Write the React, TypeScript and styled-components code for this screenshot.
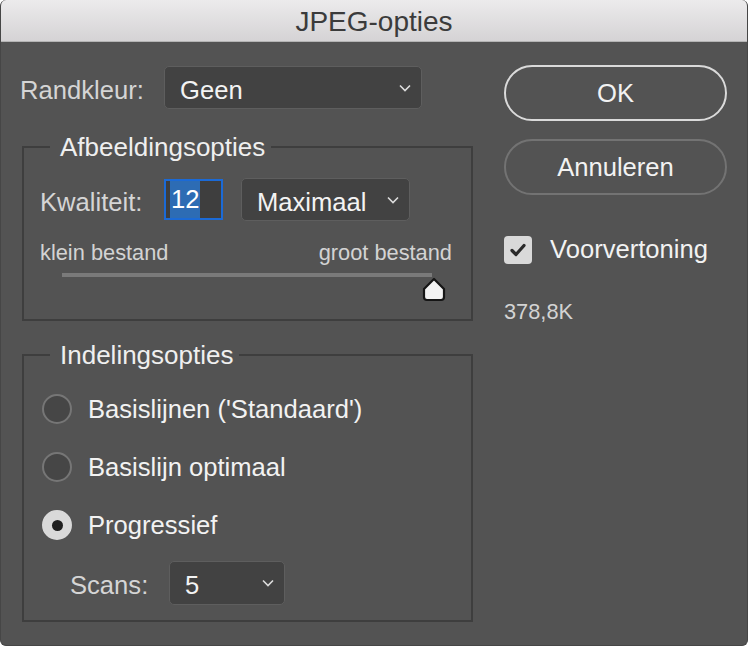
import React from "react";
import styled, { createGlobalStyle } from "styled-components";

const GlobalStyle = createGlobalStyle`
  html, body {
    margin: 0;
    padding: 0;
    background: #ffffff;
  }
`;

const Window = styled.div`
  width: 748px;
  height: 646px;
  box-sizing: border-box;
  background: #535353;
  border-radius: 6px;
  overflow: hidden;
  display: flex;
  flex-direction: column;
  font-family: "Liberation Sans", Arial, sans-serif;
  border: 1px solid #464646;
  border-top: none;
`;

const TitleBar = styled.div`
  height: 42px;
  box-sizing: border-box;
  padding-top: 3px;
  flex: none;
  display: flex;
  align-items: center;
  justify-content: center;
  background: linear-gradient(#ecebec, #d5d3d5);
  border-bottom: 1px solid #b4b4b4;
  color: #3b3b3b;
  font-size: 28px;
`;

const Body = styled.div`
  display: flex;
  gap: 31px;
  padding: 23px 20px 0 19px;
`;

const LeftColumn = styled.div`
  width: 453px;
  display: flex;
  flex-direction: column;
  margin-top: 1px;
`;

const RightColumn = styled.div`
  width: 223px;
  display: flex;
  flex-direction: column;
`;

const Row = styled.div`
  display: flex;
  align-items: center;
`;

const Label = styled.span<{ $w: number }>`
  width: ${(p) => p.$w}px;
  flex: none;
  padding-top: 5px;
  font-size: 25.6px;
  color: #d5d5d5;
`;

const SelectBox = styled.div<{ $w: number; $h: number }>`
  width: ${(p) => p.$w}px;
  height: ${(p) => p.$h}px;
  box-sizing: border-box;
  display: flex;
  align-items: center;
  justify-content: space-between;
  padding: 0 10px 0 15px;
  background: #424242;
  border: 1.5px solid #5e5e5e;
  border-radius: 5px;
  color: #f3f3f3;
  font-size: 25.6px;
`;

const SelectValue = styled.span`
  padding-top: 5px;
`;

const Group = styled.fieldset<{ $top: number; $pad: string }>`
  margin: ${(p) => p.$top}px 0 0 2px;
  width: 451px;
  box-sizing: border-box;
  min-width: 0;
  border: 2px solid #3e3e3e;
  padding: ${(p) => p.$pad};
`;

const Legend = styled.legend<{ $ml: number }>`
  margin-left: ${(p) => p.$ml}px;
  padding: 0 6px 0 10px;
  font-size: 26px;
  line-height: 30px;
  color: #efefef;
`;

const QualityInput = styled.div`
  width: 59px;
  height: 41px;
  box-sizing: border-box;
  display: flex;
  align-items: center;
  padding-left: 4px;
  border: 2px solid #1b6ad6;
  background: #3e3e3e;
`;

const Selection = styled.span`
  background: #2d6cb4;
  color: #ffffff;
  font-size: 25.6px;
  line-height: 37px;
  padding: 0 1px;
`;

const SizeLabels = styled.div`
  display: flex;
  justify-content: space-between;
  margin-top: 20px;
  font-size: 21.8px;
  line-height: 24px;
  color: #d3d3d3;
`;

const Slider = styled.div`
  position: relative;
  height: 28px;
  margin: 8px 20px 0 22px;
`;

const Track = styled.div`
  height: 4px;
  background: #7a7a7a;
`;

const Thumb = styled.svg`
  position: absolute;
  top: 4px;
`;

const RadioList = styled.div`
  display: flex;
  flex-direction: column;
  gap: 18px;
`;

const RadioRow = styled.div`
  display: flex;
  align-items: center;
  gap: 16px;
  height: 40px;
  font-size: 25.6px;
  color: #f2f2f2;
`;

const Radio = styled.span<{ $checked?: boolean }>`
  width: 30px;
  height: 30px;
  box-sizing: border-box;
  border-radius: 50%;
  display: flex;
  align-items: center;
  justify-content: center;
  border: 2px solid ${(p) => (p.$checked ? "#d9d9d9" : "#767676")};
  background: ${(p) => (p.$checked ? "#d9d9d9" : "#464646")};

  &::after {
    content: "";
    display: ${(p) => (p.$checked ? "block" : "none")};
    width: 11px;
    height: 11px;
    border-radius: 50%;
    background: #1f1f1f;
  }
`;

const ScansRow = styled(Row)`
  margin: 16px 0 0 28px;
`;

const PillButton = styled.button<{ $primary?: boolean }>`
  height: 56px;
  width: 100%;
  border-radius: 28px;
  border: 2px solid ${(p) => (p.$primary ? "#dadada" : "#737373")};
  background: transparent;
  color: #f2f2f2;
  font-family: inherit;
  font-size: 25.6px;
  margin-top: ${(p) => (p.$primary ? 0 : 18)}px;
`;

const CheckRow = styled.div`
  display: flex;
  align-items: center;
  gap: 18px;
  margin-top: 40px;
  font-size: 25.6px;
  color: #f2f2f2;
`;

const CheckBox = styled.span`
  width: 28px;
  height: 28px;
  border-radius: 4px;
  background: #d9d9d9;
  display: flex;
  align-items: center;
  justify-content: center;
`;

const FileSize = styled.div`
  margin-top: 36px;
  font-size: 21.8px;
  line-height: 24px;
  color: #d3d3d3;
`;

const Spacer = styled.div<{ $w: number }>`
  width: ${(p) => p.$w}px;
  flex: none;
`;

const Chevron = () => (
  <svg width="12" height="8" viewBox="0 0 12 8">
    <polyline
      points="1,1.5 6,6.5 11,1.5"
      fill="none"
      stroke="#dcdcdc"
      strokeWidth="1.6"
    />
  </svg>
);

const Select = ({ value, w, h }: { value: string; w: number; h: number }) => (
  <SelectBox $w={w} $h={h}>
    <SelectValue>{value}</SelectValue>
    <Chevron />
  </SelectBox>
);

const formats = [
  { label: "Basislijnen ('Standaard')", checked: false },
  { label: "Basislijn optimaal", checked: false },
  { label: "Progressief", checked: true },
];

export default function App() {
  const quality = 12;
  const pct = (quality / 12) * 100;

  return (
    <>
      <GlobalStyle />
      <Window>
        <TitleBar>JPEG-opties</TitleBar>
        <Body>
          <LeftColumn>
            <Row>
              <Label $w={144}>Randkleur:</Label>
              <Select value="Geen" w={258} h={43} />
            </Row>

            <Group $top={23} $pad="16px 19px 18px 16px">
              <Legend $ml={10}>Afbeeldingsopties</Legend>
              <Row>
                <Label $w={124}>Kwaliteit:</Label>
                <QualityInput>
                  <Selection>{quality}</Selection>
                </QualityInput>
                <Spacer $w={18} />
                <Select value="Maximaal" w={169} h={43} />
              </Row>
              <SizeLabels>
                <span>klein bestand</span>
                <span>groot bestand</span>
              </SizeLabels>
              <Slider>
                <Track />
                <Thumb
                  width="24"
                  height="25"
                  viewBox="0 0 24 25"
                  style={{ left: `calc(${pct}% - 10px)` }}
                >
                  <path
                    d="M12 2 L22 12 L22 20 Q22 23 19 23 L5 23 Q2 23 2 20 L2 12 Z"
                    fill="#f2f2f2"
                    stroke="#151515"
                    strokeWidth="2.2"
                    strokeLinejoin="round"
                  />
                </Thumb>
              </Slider>
            </Group>

            <Group $top={19} $pad="19px 19px 15px 18px">
              <Legend $ml={8}>Indelingsopties</Legend>
              <RadioList>
                {formats.map((f) => (
                  <RadioRow key={f.label}>
                    <Radio $checked={f.checked} />
                    <span>{f.label}</span>
                  </RadioRow>
                ))}
              </RadioList>
              <ScansRow>
                <Label $w={99}>Scans:</Label>
                <Select value="5" w={116} h={44} />
              </ScansRow>
            </Group>
          </LeftColumn>

          <RightColumn>
            <PillButton $primary>OK</PillButton>
            <PillButton>Annuleren</PillButton>
            <CheckRow>
              <CheckBox>
                <svg width="20" height="20" viewBox="0 0 20 20">
                  <polyline
                    points="4,10.5 8,14.5 16,5.5"
                    fill="none"
                    stroke="#2a2a2a"
                    strokeWidth="3.2"
                    strokeLinecap="round"
                    strokeLinejoin="round"
                  />
                </svg>
              </CheckBox>
              <span>Voorvertoning</span>
            </CheckRow>
            <FileSize>378,8K</FileSize>
          </RightColumn>
        </Body>
      </Window>
    </>
  );
}
